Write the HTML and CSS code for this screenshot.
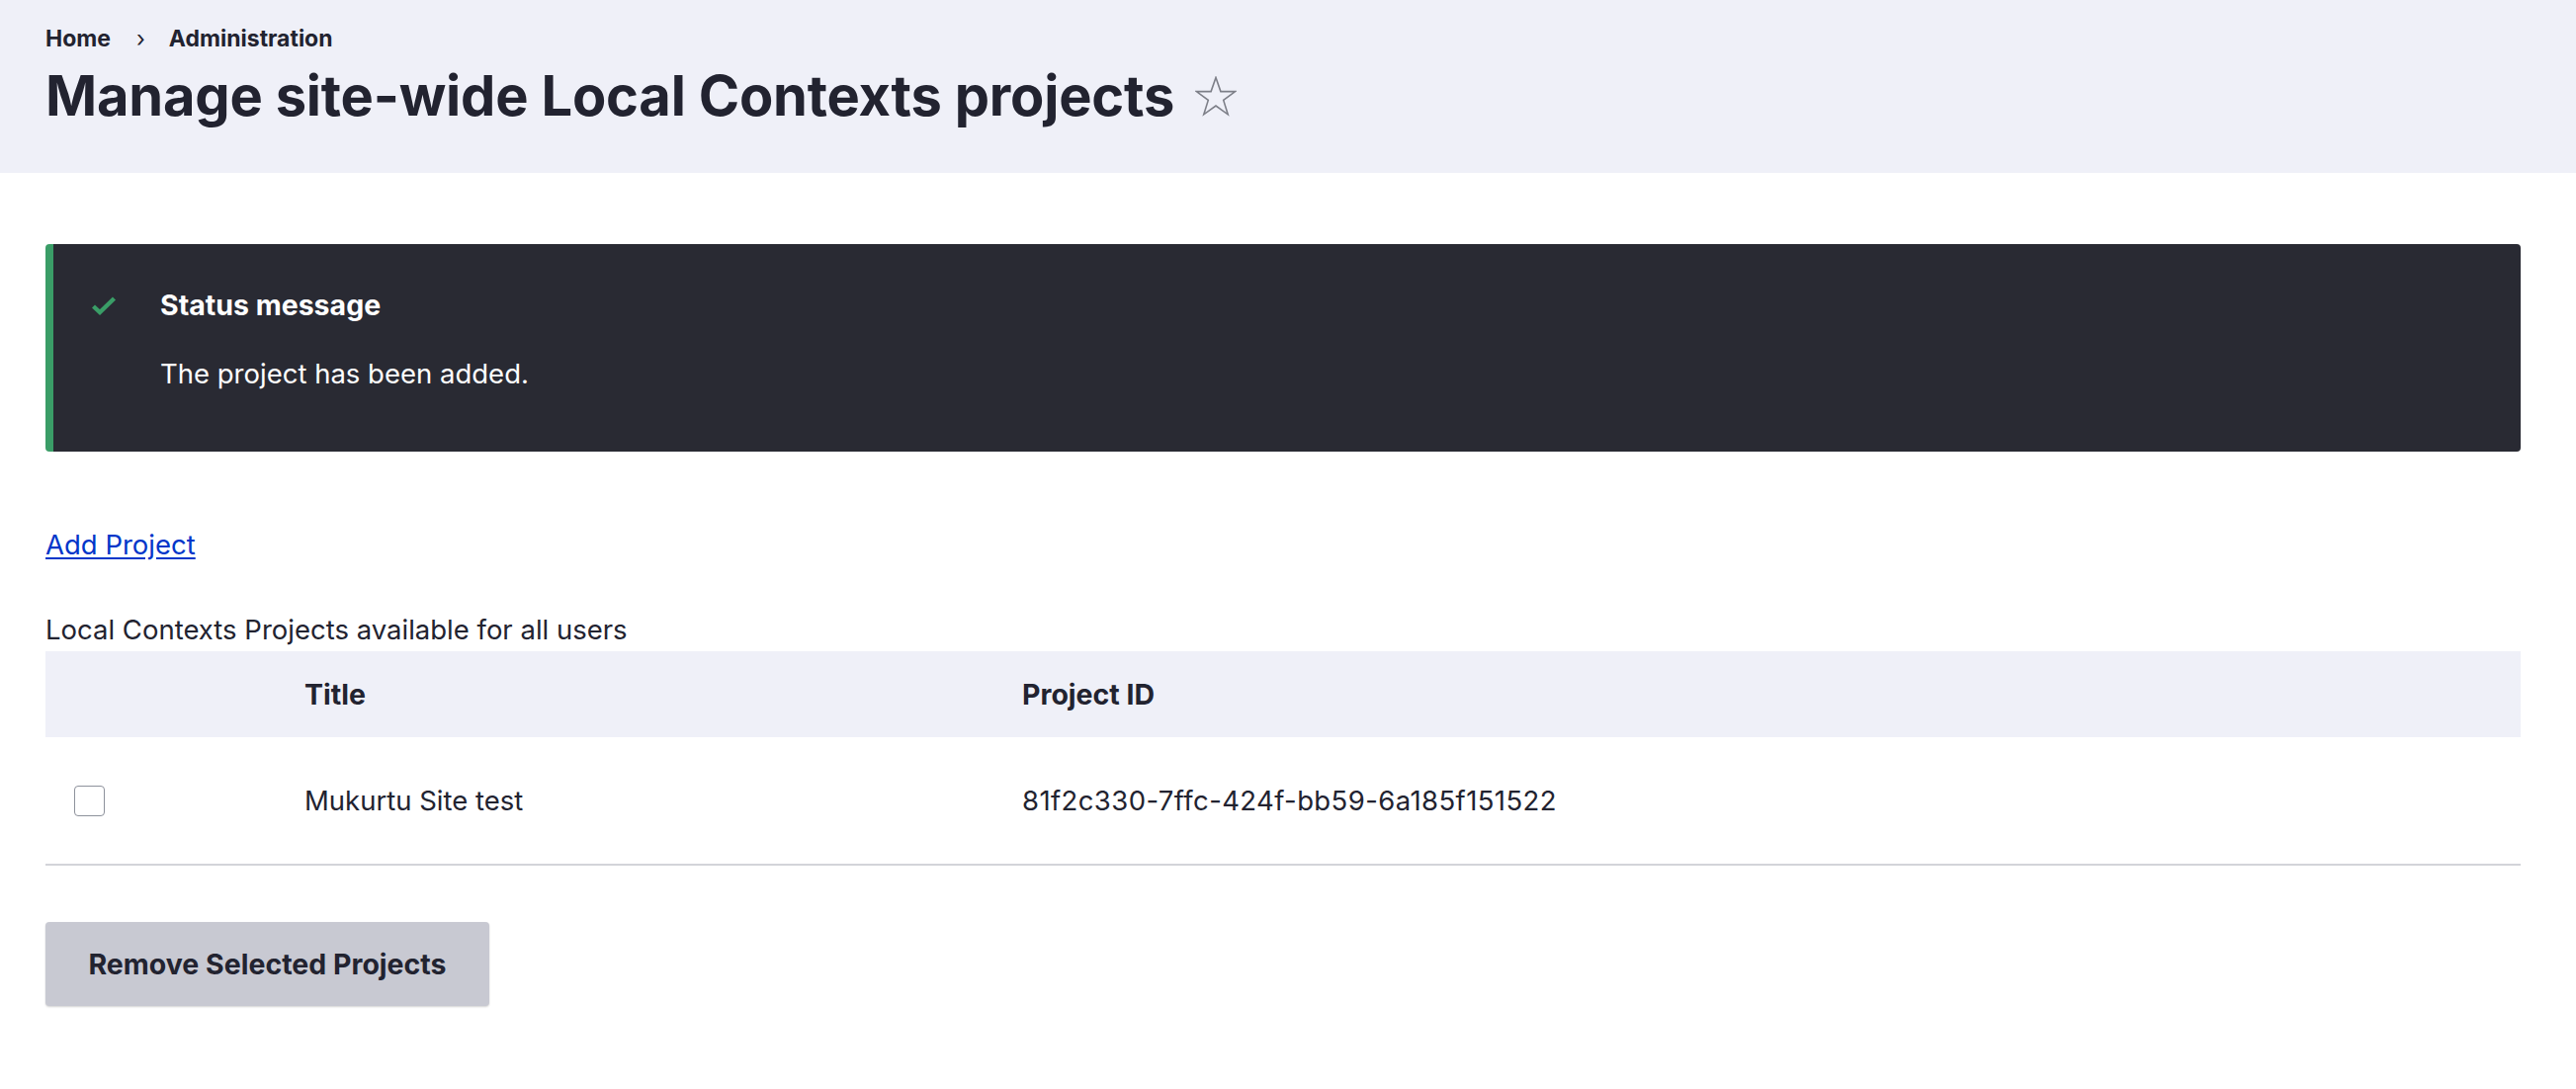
FILE: index.html
```html
<!DOCTYPE html>
<html lang="en">
<head>
<meta charset="utf-8">
<title>Manage site-wide Local Contexts projects</title>
<link rel="stylesheet" href="styles.css">
</head>
<body>
<header class="page-header">
  <nav class="breadcrumb">
    <a href="#">Home</a>
    <span class="sep">›</span>
    <a href="#">Administration</a>
  </nav>
  <div class="title-row">
    <h1 class="page-title">Manage site-wide Local Contexts projects</h1>
    <svg class="star" viewBox="0 0 42 42" width="42" height="42" aria-hidden="true">
      <polygon points="21,1.5 25.9,15.6 40.6,15.6 28.7,24.4 33.2,38.8 21,30 8.8,38.8 13.3,24.4 1.4,15.6 16.1,15.6" fill="none" stroke="#7d7f88" stroke-width="1.6" stroke-linejoin="miter"/>
    </svg>
  </div>
</header>
<main class="content">
  <div class="message">
    <svg class="msg-icon" viewBox="0 0 26 20" width="26" height="20" aria-hidden="true">
      <polyline points="2.5,11 9,17 23.5,3" fill="none" stroke="#3a9d67" stroke-width="4.4"/>
    </svg>
    <div class="msg-body">
      <h2 class="msg-title">Status message</h2>
      <p class="msg-text">The project has been added.</p>
    </div>
  </div>
  <p class="add-link"><a href="#">Add Project</a></p>
  <table class="projects">
    <caption>Local Contexts Projects available for all users</caption>
    <colgroup>
      <col class="col-check">
      <col class="col-title">
      <col>
    </colgroup>
    <thead>
      <tr><th></th><th>Title</th><th>Project ID</th></tr>
    </thead>
    <tbody>
      <tr>
        <td><span class="checkbox"></span></td>
        <td>Mukurtu Site test</td>
        <td class="id-cell">81f2c330-7ffc-424f-bb59-6a185f151522</td>
      </tr>
    </tbody>
  </table>
  <button class="button" type="button">Remove Selected Projects</button>
</main>
</body>
</html>
```
FILE: styles.css
```css
html, body {
  margin: 0;
  padding: 0;
  background: #ffffff;
}
body {
  font-family: Inter, "Noto Sans", sans-serif;
  color: #222330;
  font-size: 27.5px;
}
.page-header {
  background: #eff0f8;
  padding: 23px 46px 45px;
}
.breadcrumb {
  display: flex;
  align-items: center;
  font-size: 23px;
  line-height: 32px;
  font-weight: 700;
}
.breadcrumb a {
  color: #222330;
  text-decoration: none;
}
.breadcrumb .sep {
  font-weight: 400;
  margin: 0 24px 0 26px;
}
.title-row {
  display: flex;
  align-items: center;
  margin-top: 9px;
}
.page-title {
  margin: 0;
  font-size: 56px;
  line-height: 66px;
  font-weight: 700;
  letter-spacing: -0.2px;
}
.star {
  margin-left: 21px;
  margin-top: 2px;
}
.content {
  padding: 72px 56px 40px 46px;
}
.message {
  display: flex;
  background: #292a33;
  border-left: 8px solid #3a9d67;
  border-radius: 4px;
  padding: 44px 30px 61px 0;
  color: #ffffff;
}
.msg-icon {
  margin: 8px 0 0 38px;
  flex: none;
}
.msg-body {
  margin-left: 44px;
}
.msg-title {
  margin: 0;
  font-size: 28.5px;
  line-height: 36px;
  font-weight: 700;
}
.msg-text {
  margin: 33px 0 0;
  line-height: 36px;
}
.add-link {
  margin: 76px 0 0;
  line-height: 36px;
}
.add-link a {
  color: #0036c9;
  text-decoration: underline;
  text-underline-offset: 3px;
}
.projects {
  width: 100%;
  margin-top: 50px;
  border-collapse: collapse;
  table-layout: fixed;
}
.projects caption {
  text-align: left;
  line-height: 36px;
  padding-bottom: 4px;
}
.col-check { width: 233px; }
.col-title { width: 726px; }
.projects th {
  background: #eff0f8;
  text-align: left;
  font-weight: 700;
  font-size: 28.5px;
  height: 87px;
  padding: 0 29px;
}
.projects td {
  height: 128px;
  padding: 0 29px;
  border-bottom: 2px solid #d3d4d9;
}
.projects td.id-cell {
  letter-spacing: 0.4px;
}
.checkbox {
  display: block;
  width: 29px;
  height: 29px;
  border: 1.5px solid #8e929c;
  border-radius: 4px;
  background: #fff;
}
.button {
  display: block;
  margin-top: 57px;
  width: 449px;
  height: 85px;
  background: #c8c9d2;
  border: 0;
  border-radius: 4px;
  box-shadow: 0 1px 2px rgba(0,0,0,0.18);
  font-family: inherit;
  font-size: 28.5px;
  font-weight: 700;
  color: #222330;
  padding: 0;
}
```
